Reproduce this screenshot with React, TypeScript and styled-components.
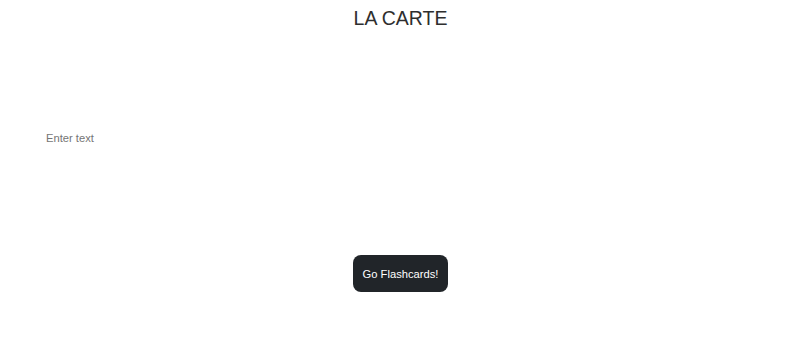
import styled, { createGlobalStyle } from 'styled-components'
import { useState } from 'react'

const GlobalStyle = createGlobalStyle`
	html, body {
		margin: 0;
		padding: 0;
		background: #ffffff;
		font-family: "Liberation Sans", Arial, sans-serif;
	}
`

export default function App(): JSX.Element {
	const [text, setText] = useState("")

	return (
		<Page>
			<GlobalStyle />
			<Title>LA CARTE</Title>
			<TextArea
				placeholder="Enter text"
				value={text}
				onChange={(e) => setText(e.target.value)}
			/>
			<ButtonRow>
				<FlashButton type="button">Go Flashcards!</FlashButton>
			</ButtonRow>
		</Page>
	)
}

const Page = styled.main`
	display: flex;
	flex-direction: column;
	width: 801px;
	height: 340px;
	box-sizing: border-box;
`
const Title = styled.h1`
	margin: 7px 0 0;
	text-align: center;
	font-size: 19.5px;
	line-height: 22px;
	font-weight: 400;
	color: #2e2e2e;
`
const TextArea = styled.textarea`
	margin: 97px 0 0 40px;
	padding: 6px;
	width: 700px;
	height: 110px;
	border: none;
	outline: none;
	resize: none;
	background: transparent;
	font-family: "Liberation Sans", Arial, sans-serif;
	font-size: 11.2px;
	line-height: 13px;
	color: #333;
	&::placeholder {
		color: #757575;
	}
`
const ButtonRow = styled.div`
	display: flex;
	justify-content: center;
	margin-top: 7px;
`
const FlashButton = styled.button`
	height: 37px;
	padding: 0 10px;
	border: none;
	border-radius: 8px;
	background: #212529;
	color: #ffffff;
	font-family: "Liberation Sans", Arial, sans-serif;
	font-size: 11.2px;
	cursor: pointer;
`
